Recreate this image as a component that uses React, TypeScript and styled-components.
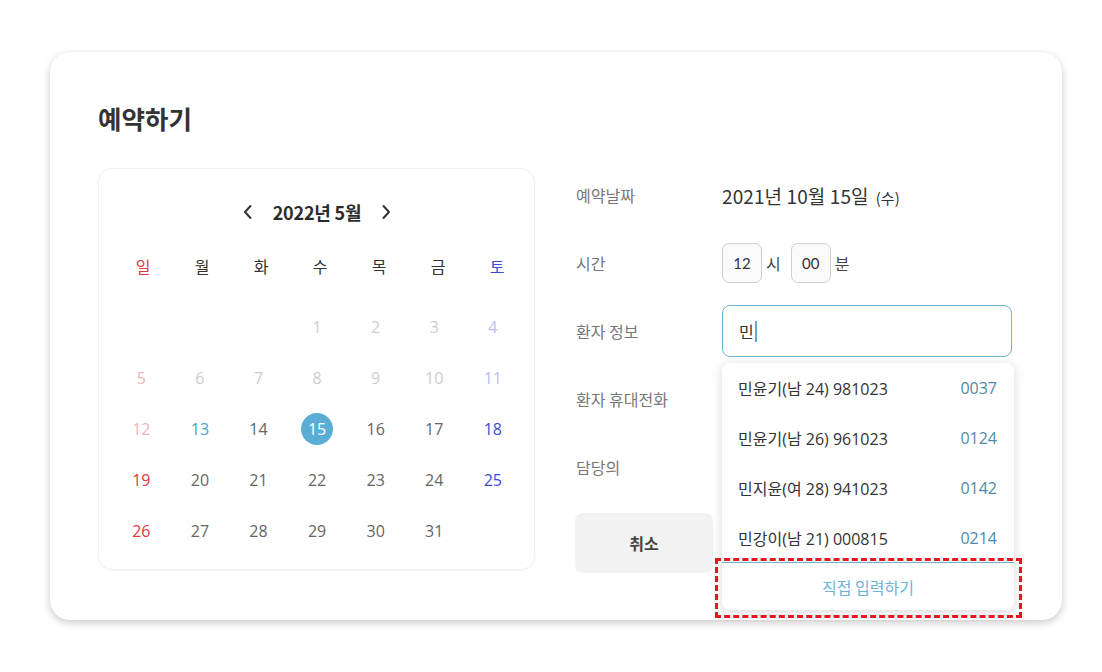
import React from "react";
import styled, { createGlobalStyle } from "styled-components";

const Global = createGlobalStyle`
  * { box-sizing: border-box; }
  html, body { margin: 0; padding: 0; background: #ffffff; }
  body {
    font-family: "Noto Sans CJK KR", "Noto Sans", sans-serif;
    color: #333;
  }
`;

const Page = styled.div`
  padding: 52px 40px 40px 50px;
`;

const Card = styled.div`
  width: 1012px;
  height: 568px;
  background: #fff;
  border-radius: 20px;
  box-shadow: 0 3px 8px rgba(0, 0, 0, 0.2), 0 0 3px rgba(0, 0, 0, 0.04);
  padding: 51px 48px 50px;
`;

const Title = styled.h1`
  margin: 0 0 35px;
  font-size: 25.5px;
  line-height: 30px;
  font-weight: 700;
  color: #333;
`;

const Content = styled.div`
  display: flex;
  align-items: flex-start;
  gap: 41px;
`;

const Calendar = styled.div`
  width: 437px;
  height: 402px;
  border: 1px solid #efefef;
  border-radius: 14px;
  box-shadow: 0 1px 3px rgba(0, 0, 0, 0.04);
  padding: 30px 8px 0 13px;
`;

const CalHeader = styled.div`
  display: flex;
  justify-content: center;
  align-items: center;
  gap: 19px;
  height: 26px;
  margin-left: -4px;
`;

const MonthLabel = styled.span`
  font-size: 18px;
  font-weight: 700;
  color: #2b2b2b;
  letter-spacing: -0.2px;
`;

const NavBtn = styled.span`
  display: flex;
  width: 12px;
  justify-content: center;
`;

const WeekRow = styled.div`
  display: grid;
  grid-template-columns: repeat(7, 59px);
  margin: 29px 0 0 1.5px;
  height: 24px;
  align-items: center;
`;

const DaysGrid = styled.div`
  display: grid;
  grid-template-columns: repeat(7, 58.6px);
  margin-top: 23px;
  grid-auto-rows: 51px;
`;

const WeekDay = styled.span<{ $c: string }>`
  text-align: center;
  font-size: 16px;
  color: ${(p) => p.$c};
`;

const DayCell = styled.div`
  display: flex;
  align-items: center;
  justify-content: center;
`;

const DayNum = styled.span<{ $c: string; $sel?: boolean }>`
  width: 32px;
  height: 32px;
  border-radius: 50%;
  display: flex;
  align-items: center;
  justify-content: center;
  font-family: "Open Sans", "Noto Sans", sans-serif;
  font-size: 16px;
  color: ${(p) => (p.$sel ? "#fff" : p.$c)};
  background: ${(p) => (p.$sel ? "#5aaed6" : "transparent")};
`;

const Form = styled.div`
  flex: 1;
  display: flex;
  flex-direction: column;
`;

const Rows = styled.div`
  display: flex;
  flex-direction: column;
  gap: 14px;
`;

const Row = styled.div`
  display: flex;
  align-items: center;
  height: 54px;
`;

const Label = styled.div`
  width: 146px;
  font-size: 16px;
  color: #777;
`;

const Value = styled.div`
  flex: 1;
  display: flex;
  align-items: center;
  position: relative;
  height: 100%;
`;

const DateText = styled.span`
  font-size: 19px;
  color: #333;
  letter-spacing: 0.1px;
  small {
    font-size: 15px;
    margin-left: 7px;
  }
`;

const TimeBox = styled.div`
  width: 40px;
  height: 40px;
  border: 1px solid #cfcfcf;
  border-radius: 7px;
  background: #fafafa;
  display: flex;
  align-items: center;
  justify-content: center;
  font-family: "Lato", "Noto Sans", sans-serif;
  font-size: 15px;
  color: #333;
`;

const Unit = styled.span`
  font-size: 16px;
  color: #444;
  margin: 0 10px 0 4px;
`;

const SearchInput = styled.div`
  width: 290px;
  height: 52px;
  border: 1px solid #6fb2d2;
  border-radius: 8px;
  display: flex;
  align-items: center;
  padding-left: 16px;
  font-size: 16px;
  color: #333;
`;

const Caret = styled.span`
  width: 2px;
  height: 21px;
  background: #5aaed6;
  margin-left: 1px;
`;

const Dropdown = styled.div`
  position: absolute;
  top: 59px;
  left: 0;
  width: 292px;
  background: #fff;
  border-radius: 8px;
  box-shadow: 0 2px 12px rgba(0, 0, 0, 0.16);
  z-index: 5;
`;

const Option = styled.div`
  height: 50px;
  display: flex;
  align-items: center;
  justify-content: space-between;
  padding: 0 17px 0 16px;
  font-family: "Open Sans", "Noto Sans CJK KR", sans-serif;
  font-size: 16px;
  color: #333;
`;

const Code = styled.span`
  color: #4d8bab;
`;

const Footer = styled.div`
  height: 48px;
  border-top: 1px solid #6aaecd;
  display: flex;
  align-items: center;
  justify-content: center;
  font-size: 16px;
  color: #6cb3d6;
  position: relative;
  margin-top: -1px;
`;

const Highlight = styled.div`
  position: absolute;
  left: -7px;
  top: -5px;
  width: 307px;
  height: 60px;
  border: 3px dashed #e3171e;
  pointer-events: none;
`;

const Buttons = styled.div`
  display: flex;
  gap: 8px;
  margin-top: 19px;
  margin-left: -1px;
`;

const Button = styled.button`
  height: 60px;
  width: 138px;
  border: none;
  border-radius: 8px;
  background: #f2f2f2;
  color: #444;
  font-family: "Noto Sans CJK KR", sans-serif;
  font-size: 16px;
  font-weight: 700;
`;

const Chevron = ({ dir }: { dir: "l" | "r" }) => (
  <svg width="10" height="16" viewBox="0 0 10 16">
    <path
      d={dir === "l" ? "M7.5 2 L2 8 L7.5 14" : "M2.5 2 L8 8 L2.5 14"}
      fill="none"
      stroke="#333"
      strokeWidth="2"
      strokeLinecap="round"
      strokeLinejoin="round"
    />
  </svg>
);

const weekdays: [string, string][] = [
  ["일", "#e0383e"],
  ["월", "#333"],
  ["화", "#333"],
  ["수", "#333"],
  ["목", "#333"],
  ["금", "#333"],
  ["토", "#3c4bd6"],
];

const TODAY = 13;
const SELECTED = 15;

function dayColor(day: number, col: number): string {
  const past = day < 13;
  if (day === TODAY) return "#4aa3cf";
  if (col === 0) return past ? "#f5b3bc" : "#e0383e";
  if (col === 6) return past ? "#b9bdf0" : "#3c4bd6";
  return past ? "#cccccc" : "#666666";
}

const patients = [
  ["민윤기(남 24) 981023", "0037"],
  ["민윤기(남 26) 961023", "0124"],
  ["민지윤(여 28) 941023", "0142"],
  ["민강이(남 21) 000815", "0214"],
];

export default function App() {
  const cells: (number | null)[] = [null, null, null];
  for (let d = 1; d <= 31; d++) cells.push(d);

  return (
    <Page>
      <Global />
      <Card>
        <Title>예약하기</Title>
        <Content>
          <Calendar>
            <CalHeader>
              <NavBtn>
                <Chevron dir="l" />
              </NavBtn>
              <MonthLabel>2022년 5월</MonthLabel>
              <NavBtn>
                <Chevron dir="r" />
              </NavBtn>
            </CalHeader>
            <WeekRow>
              {weekdays.map(([w, c]) => (
                <WeekDay key={w} $c={c}>
                  {w}
                </WeekDay>
              ))}
            </WeekRow>
            <DaysGrid>
              {cells.map((d, i) => (
                <DayCell key={i}>
                  {d !== null && (
                    <DayNum $c={dayColor(d, i % 7)} $sel={d === SELECTED}>
                      {d}
                    </DayNum>
                  )}
                </DayCell>
              ))}
            </DaysGrid>
          </Calendar>

          <Form>
            <Rows>
              <Row>
                <Label>예약날짜</Label>
                <Value>
                  <DateText>
                    2021년 10월 15일<small>(수)</small>
                  </DateText>
                </Value>
              </Row>
              <Row>
                <Label>시간</Label>
                <Value>
                  <TimeBox>12</TimeBox>
                  <Unit>시</Unit>
                  <TimeBox>00</TimeBox>
                  <Unit>분</Unit>
                </Value>
              </Row>
              <Row>
                <Label>환자 정보</Label>
                <Value>
                  <SearchInput>
                    민<Caret />
                  </SearchInput>
                  <Dropdown>
                    {patients.map(([name, code]) => (
                      <Option key={code}>
                        <span>{name}</span>
                        <Code>{code}</Code>
                      </Option>
                    ))}
                    <Footer>
                      직접 입력하기
                      <Highlight />
                    </Footer>
                  </Dropdown>
                </Value>
              </Row>
              <Row>
                <Label>환자 휴대전화</Label>
                <Value />
              </Row>
              <Row>
                <Label>담당의</Label>
                <Value />
              </Row>
            </Rows>
            <Buttons>
              <Button>취소</Button>
            </Buttons>
          </Form>
        </Content>
      </Card>
    </Page>
  );
}
